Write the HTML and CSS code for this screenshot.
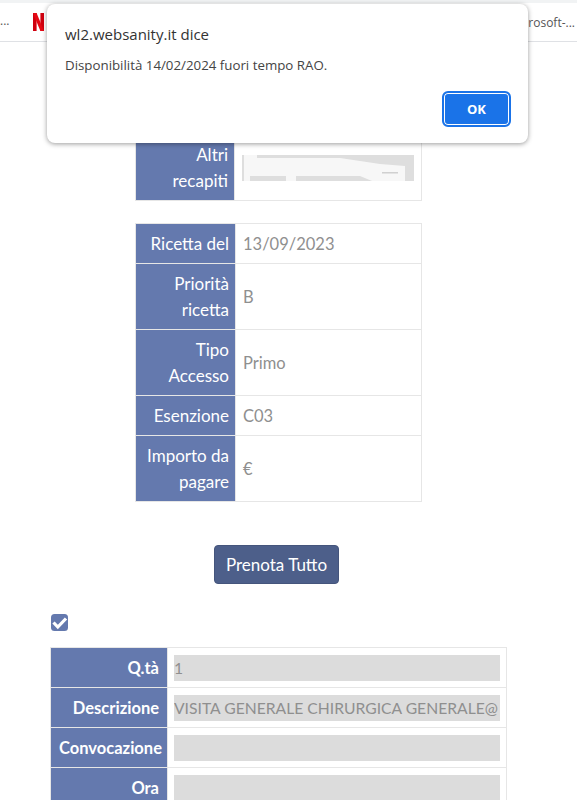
FILE: index.html
```html
<!DOCTYPE html>
<html>
<head>
    <title>Prenotazione</title>
    <link rel="stylesheet" href="styles.css">
</head>
<body>
    <!-- barra dei preferiti -->
    <div class="bookmarks">
        <span class="bm-dots">...</span>
        <svg class="bm-logo" width="11" height="18" viewBox="0 0 11 18">
            <polygon points="0,0 3.6,0 3.6,18 0,18" fill="#d0000f"/>
            <polygon points="7.4,0 11,0 11,18 7.4,18" fill="#d0000f"/>
            <polygon points="0,0 3.6,0 11,18 7.4,18" fill="#e50914"/>
        </svg>
        <span class="bm-right">rosoft-...</span>
    </div>

    <div class="alert">
        <div class="alert-title">wl2.websanity.it dice</div>
        <div class="alert-msg">Disponibilità 14/02/2024 fuori tempo RAO.</div>
        <div class="alert-actions">
            <button class="alert-ok">OK</button>
        </div>
    </div>

    <div class="main">
        <table class="info first">
            <tr>
                <th>Altri<br>recapiti</th>
                <td>
                    <svg class="redacted" width="172" height="26" viewBox="0 0 172 26">
                        <rect width="172" height="26" fill="#dedede"/>
                        <polygon points="2,0 15,0 15,3 98,3 138,9 163,11 163,26 130,26 118,21 54,21 54,26 44,26 44,21 8,21 8,26 2,26" fill="#f7f7f7"/>
                        <rect x="140" y="17" width="16" height="1.5" fill="#d0d0d0"/>
                    </svg>
                </td>
            </tr>
        </table>

        <table class="info">
            <tr><th>Ricetta del</th><td>13/09/2023</td></tr>
            <tr><th>Priorità<br>ricetta</th><td>B</td></tr>
            <tr><th>Tipo<br>Accesso</th><td>Primo</td></tr>
            <tr><th>Esenzione</th><td>C03</td></tr>
            <tr><th>Importo da<br>pagare</th><td>€</td></tr>
        </table>

        <div class="actions">
            <button class="btn-prenota">Prenota Tutto</button>
        </div>

        <div class="check-row">
            <svg width="17" height="17" viewBox="0 0 17 17">
                <rect width="17" height="17" rx="3.5" fill="#6479ae"/>
                <path d="M2.5 8.5 L6.8 13 L15 4.5" fill="none" stroke="#fff" stroke-width="3.2"/>
            </svg>
        </div>

        <table class="detail">
            <tr><th>Q.tà</th><td><div class="field">1</div></td></tr>
            <tr><th>Descrizione</th><td><div class="field">VISITA GENERALE CHIRURGICA GENERALE@</div></td></tr>
            <tr><th>Convocazione</th><td><div class="field"></div></td></tr>
            <tr><th>Ora</th><td><div class="field"></div></td></tr>
        </table>
    </div>
</body>
</html>
```

FILE: styles.css
```css
html, body {
    margin: 0;
    height: 100%;
    overflow: hidden;
}
body {
    font-family: "Lato", "Open Sans", sans-serif;
    background: #fff;
    color: #8f8f8f;
}

/* barra dei preferiti */
.bookmarks {
    height: 38px;
    border-top: 3px solid #f1f3f4;
    border-bottom: 1px solid #dfe1e5;
    display: flex;
    align-items: center;
    font-family: "Open Sans", sans-serif;
    font-size: 12px;
    color: #555;
}
.bm-dots {
    width: 33px;
    margin-top: -4px;
}
.bm-right {
    margin-left: auto;
    margin-right: 2px;
}

/* finestra di avviso */
.alert {
    position: absolute;
    left: 47px;
    top: 4px;
    width: 481px;
    height: 139px;
    box-sizing: border-box;
    padding: 20px 17px 16px 18px;
    background: #fff;
    border-radius: 8px;
    box-shadow: 0 1px 5px rgba(0, 0, 0, 0.4);
    font-family: "Open Sans", sans-serif;
    color: #333;
}
.alert-title {
    font-size: 15px;
    line-height: 20px;
}
.alert-msg {
    font-size: 13.3px;
    line-height: 18px;
    margin-top: 12px;
    color: #444;
}
.alert-actions {
    display: flex;
    justify-content: flex-end;
    margin-top: 17px;
}
.alert-ok {
    width: 69px;
    height: 36px;
    background: #1a73e8;
    color: #fff;
    border: 2px solid #1a73e8;
    box-shadow: inset 0 0 0 1px #fff;
    border-radius: 6px;
    font-family: "Open Sans", sans-serif;
    font-size: 13px;
    font-weight: 700;
}

/* tabelle */
table {
    border-collapse: collapse;
    background: #fff;
}
.main {
    display: flex;
    flex-direction: column;
}
.info {
    width: 287px;
    margin: 22px 0 0 135px;
    font-size: 17px;
    line-height: 26px;
}
.info.first {
    margin-top: 92px;
}
.info th, .detail th {
    background: #6479ae;
    color: #fff;
    text-align: right;
    border: 1px solid #e6e6e6;
}
.info th {
    width: 100px;
    box-sizing: border-box;
    padding: 7px 6px 6px;
    font-weight: 400;
}
.info td {
    border: 1px solid #e6e6e6;
    padding: 7px 7px 6px;
    font-size: 16.5px;
}
.redacted {
    display: block;
    filter: blur(0.5px);
}

.actions {
    margin: 43px 0 0 214px;
}
.btn-prenota {
    display: block;
    width: 125px;
    height: 39px;
    background: #4d5f8a;
    color: #fff;
    border: 1px solid #45557c;
    border-radius: 4px;
    font-family: inherit;
    font-size: 17px;
}

.check-row {
    margin: 30px 0 0 51px;
    height: 17px;
}
.check-row svg {
    display: block;
}

.detail {
    width: 457px;
    margin: 16px 0 0 50px;
    table-layout: fixed;
    font-size: 16.5px;
}
.detail th {
    width: 117px;
    box-sizing: border-box;
    padding: 0 8px;
    height: 40px;
    font-weight: 700;
}
.detail td {
    border: 1px solid #e6e6e6;
    padding: 7px 6px 6px;
}
.field {
    height: 26px;
    line-height: 26px;
    background: #dcdcdc;
    white-space: nowrap;
    overflow: hidden;
    font-size: 15.7px;
}
```
